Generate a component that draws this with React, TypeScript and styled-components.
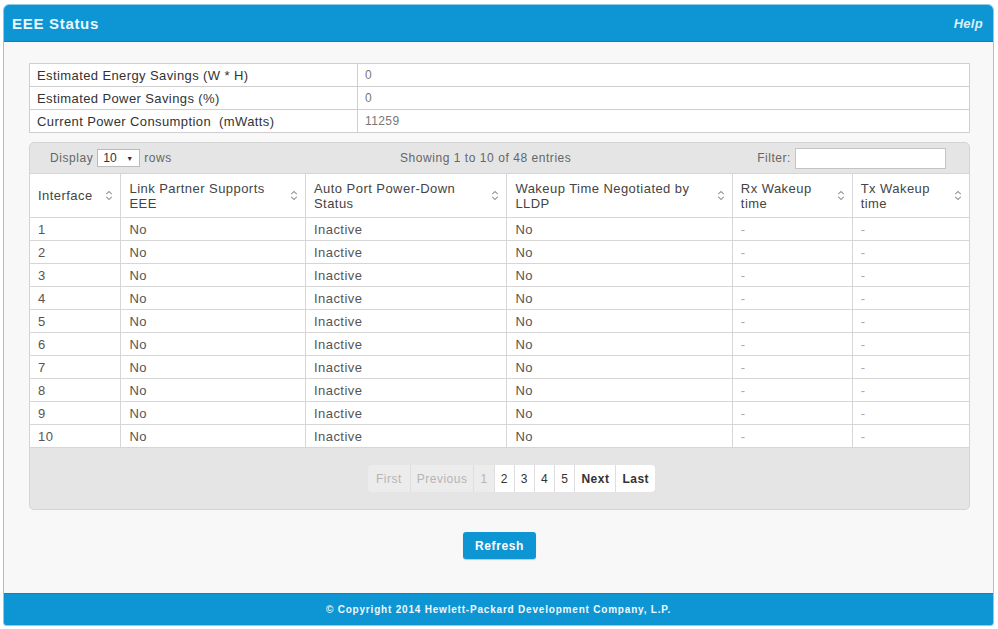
import React from "react";
import styled, { createGlobalStyle } from "styled-components";

const Global = createGlobalStyle`
  html, body { margin: 0; padding: 0; background: #ffffff; }
  body { font-family: "Liberation Sans", Arial, sans-serif; color: #333; }
  * { box-sizing: border-box; }
`;

const Page = styled.div`
  padding: 4px 4px 3px 3px;
  width: 998px;
`;

const Panel = styled.div`
  border: 1px solid #8fcbe3;
  border-radius: 6px 6px 3px 3px;
  background: #f8f8f8;
  overflow: hidden;
  display: flex;
  flex-direction: column;
  height: 622px;
`;

const Header = styled.div`
  background: #0e95d3;
  height: 37px;
  display: flex;
  align-items: center;
  justify-content: space-between;
  padding: 0 10px 0 8px;
  color: #fff;
  border-bottom: 1px solid #0b7fb6;
`;

const Title = styled.div`
  font-weight: bold;
  font-size: 15px;
  letter-spacing: 0.7px;
  color: #eaf7fd;
`;

const Help = styled.a`
  font-weight: bold;
  font-style: italic;
  font-size: 13px;
  letter-spacing: 0.3px;
  color: #d8f0fb;
`;

const Body = styled.div`
  flex: 1;
  padding: 21px 23px 0 25px;
  display: flex;
  flex-direction: column;
`;

const SummaryTable = styled.table`
  width: 941px;
  border-collapse: collapse;
  background: #fff;
  font-size: 13px;
  letter-spacing: 0.4px;
  td {
    border: 1px solid #cfcfcf;
    height: 23px;
    padding: 0 7px;
  }
  td:first-child { width: 328px; color: #333; }
  td:last-child { color: #777; font-size: 12px; }
`;

const DT = styled.div`
  margin-top: 9px;
  width: 941px;
  background: #e5e5e5;
  border: 1px solid #d4d4d4;
  border-radius: 5px;
  overflow: hidden;
`;

const Toolbar = styled.div`
  height: 30px;
  display: flex;
  align-items: center;
  padding: 0 23px 0 20px;
  font-size: 12px;
  letter-spacing: 0.55px;
  color: #666;
`;

const Length = styled.div`
  display: flex;
  align-items: center;
  gap: 4px;
  width: 350px;
`;

const Select = styled.div`
  width: 43px;
  height: 18px;
  background: #fff;
  border: 1px solid #bbb;
  display: flex;
  align-items: center;
  justify-content: space-between;
  padding: 0 6px 0 5px;
  color: #333;
  font-size: 12px;
  letter-spacing: 0;
`;

const Info = styled.div`
  flex: 1;
`;

const FilterBox = styled.div`
  display: flex;
  align-items: center;
  gap: 4px;
`;

const FilterInput = styled.div`
  width: 151px;
  height: 21px;
  background: #fff;
  border: 1px solid #c4c4c4;
`;

const Grid = styled.table`
  width: 100%;
  border-collapse: collapse;
  background: #fff;
  font-size: 13px;
  letter-spacing: 0.45px;
  th, td {
    border-right: 1px solid #d6d6d6;
    border-bottom: 1px solid #d6d6d6;
    text-align: left;
  }
  th:last-child, td:last-child { border-right: none; }
  th {
    height: 44px;
    font-weight: normal;
    color: #444;
    padding: 4px 7px 4px 8px;
    line-height: 15px;
    border-top: 1px solid #d6d6d6;
  }
  td {
    height: 23px;
    padding: 0 8px;
    color: #555;
  }
`;

const ThInner = styled.div`
  display: flex;
  align-items: center;
  justify-content: space-between;
  gap: 4px;
`;

const Dash = styled.span`
  color: #aaa;
`;

const PagerArea = styled.div`
  height: 61px;
  display: flex;
  align-items: center;
  justify-content: center;
  padding-left: 24px;
`;

const Pager = styled.div`
  display: flex;
  border-radius: 4px;
  overflow: hidden;
  height: 27px;
`;

const PageBtn = styled.div<{ $off?: boolean; $strong?: boolean }>`
  display: flex;
  align-items: center;
  padding: 0 6px;
  font-size: 12px;
  letter-spacing: 0.5px;
  background: ${(p) => (p.$off ? "#ececec" : "#fff")};
  color: ${(p) => (p.$off ? "#b5b5b5" : "#333")};
  font-weight: ${(p) => (p.$strong ? "bold" : "normal")};
  border-left: 1px solid #dedede;
  &:first-child { border-left: none; padding: 0 8px; }
`;

const ButtonRow = styled.div`
  display: flex;
  justify-content: center;
  margin-top: 22px;
`;

const Refresh = styled.button`
  background: #0e95d3;
  color: #fff;
  border: none;
  border-radius: 3px;
  width: 73px;
  height: 27px;
  font-family: "Liberation Sans", Arial, sans-serif;
  font-weight: bold;
  font-size: 12px;
  letter-spacing: 0.6px;
  box-shadow: 0 1px 1px rgba(0,0,0,0.2);
`;

const Footer = styled.div`
  background: #0e95d3;
  height: 32px;
  display: flex;
  align-items: center;
  justify-content: center;
  color: #eef8fd;
  font-size: 10px;
  letter-spacing: 0.8px;
  font-weight: bold;
  border-top: 1px solid #0b84bd;
`;

const SortIcon = () => (
  <svg width="8" height="11" viewBox="0 0 8 11" style={{ flexShrink: 0 }}>
    <path d="M1.2 4.2 L4 1.5 L6.8 4.2 M1.2 6.8 L4 9.5 L6.8 6.8" fill="none" stroke="#999" strokeWidth="1.1" />
  </svg>
);

const headers = [
  { label: "Interface", w: 91 },
  { label: "Link Partner Supports EEE", w: 185 },
  { label: "Auto Port Power-Down Status", w: 202 },
  { label: "Wakeup Time Negotiated by LLDP", w: 226 },
  { label: "Rx Wakeup time", w: 120 },
  { label: "Tx Wakeup time", w: 117 },
];

const rows = Array.from({ length: 10 }, (_, i) => i + 1);

export default function App() {
  return (
    <>
      <Global />
      <Page>
        <Panel>
          <Header>
            <Title>EEE Status</Title>
            <Help>Help</Help>
          </Header>
          <Body>
            <SummaryTable>
              <tbody>
                <tr><td>Estimated Energy Savings (W * H)</td><td>0</td></tr>
                <tr><td>Estimated Power Savings (%)</td><td>0</td></tr>
                <tr><td>Current Power Consumption &nbsp;(mWatts)</td><td>11259</td></tr>
              </tbody>
            </SummaryTable>
            <DT>
              <Toolbar>
                <Length>
                  Display
                  <Select><span>10</span><span style={{ fontSize: 7 }}>▼</span></Select>
                  rows
                </Length>
                <Info>Showing 1 to 10 of 48 entries</Info>
                <FilterBox>
                  Filter:
                  <FilterInput />
                </FilterBox>
              </Toolbar>
              <Grid>
                <colgroup>
                  {headers.map((h) => (
                    <col key={h.label} style={{ width: h.w }} />
                  ))}
                </colgroup>
                <thead>
                  <tr>
                    {headers.map((h) => (
                      <th key={h.label}>
                        <ThInner>
                          <span>{h.label}</span>
                          <SortIcon />
                        </ThInner>
                      </th>
                    ))}
                  </tr>
                </thead>
                <tbody>
                  {rows.map((r) => (
                    <tr key={r}>
                      <td>{r}</td>
                      <td>No</td>
                      <td>Inactive</td>
                      <td>No</td>
                      <td><Dash>-</Dash></td>
                      <td><Dash>-</Dash></td>
                    </tr>
                  ))}
                </tbody>
              </Grid>
              <PagerArea>
                <Pager>
                  <PageBtn $off>First</PageBtn>
                  <PageBtn $off>Previous</PageBtn>
                  <PageBtn $off>1</PageBtn>
                  <PageBtn>2</PageBtn>
                  <PageBtn>3</PageBtn>
                  <PageBtn>4</PageBtn>
                  <PageBtn>5</PageBtn>
                  <PageBtn $strong>Next</PageBtn>
                  <PageBtn $strong>Last</PageBtn>
                </Pager>
              </PagerArea>
            </DT>
            <ButtonRow>
              <Refresh>Refresh</Refresh>
            </ButtonRow>
          </Body>
          <Footer>© Copyright 2014 Hewlett-Packard Development Company, L.P.</Footer>
        </Panel>
      </Page>
    </>
  );
}
